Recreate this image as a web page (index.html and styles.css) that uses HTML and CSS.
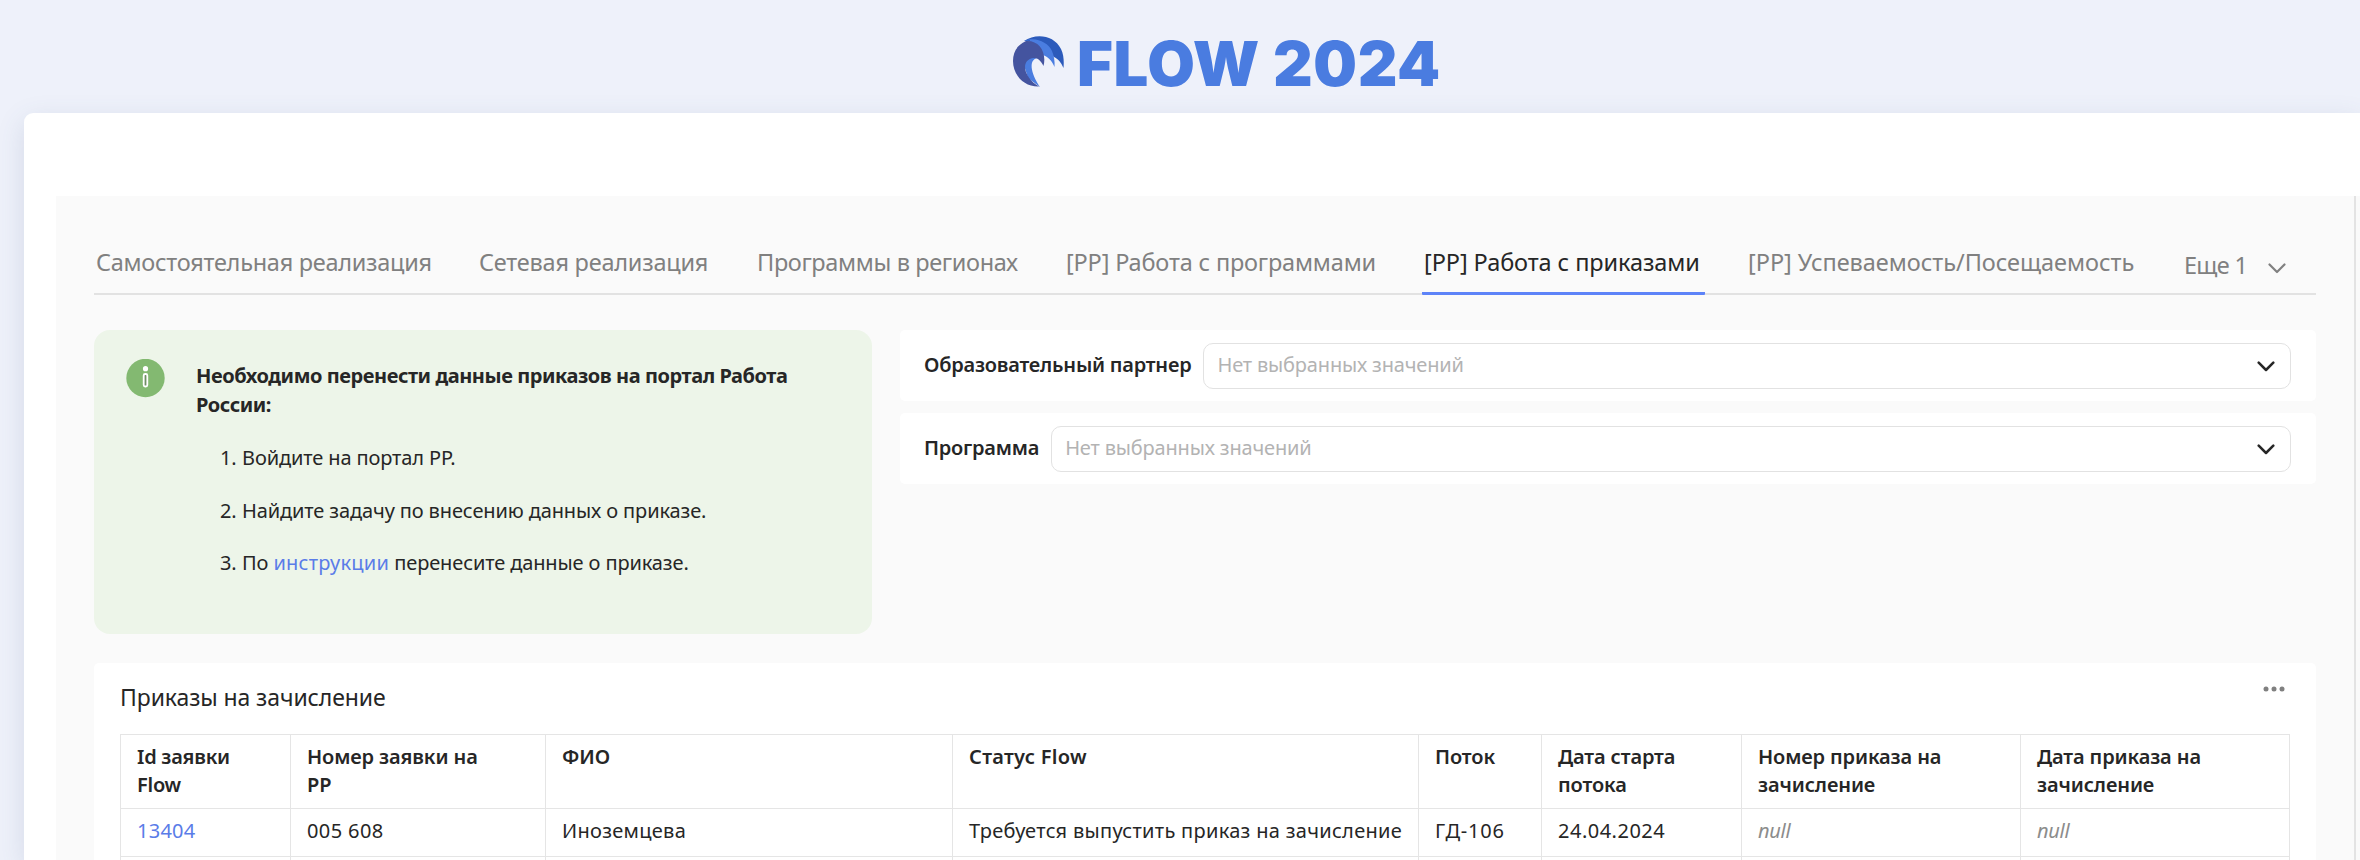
FILE: index.html
```html
<!DOCTYPE html>
<html lang="ru">
<head>
<meta charset="utf-8">
<title>FLOW 2024</title>
<link rel="stylesheet" href="styles.css">
</head>
<body>
<header class="brand">
  <svg class="brand-logo" width="51" height="51" viewBox="0 0 51 51" aria-hidden="true">
    <path fill="#2b5abb" d="M11 5C23-3 41-1 48 13c3 6 3 13 2.500 19C48 26 45 23 41 21L22 6Z"/>
    <path fill="#4a7de0" d="M11 5C22 0 35 6 39 15c2 5 3 10 2.500 16C39 25 35 20 29 19L24 22C16 24 17 36 27 51L15 42L10 26L17 4Z"/>
    <path fill="#44549f" d="M13 5C26 4 34 16 30.500 30C28 25 25 21.500 20 22C6 25 12 43 26 50.500C11 51 0 39 0 25C0 16 4 9 13 5Z"/>
  </svg>
  <h1 class="brand-title">FLOW 2024</h1>
</header>
<main class="card">
  <div class="dashboard">
    <nav class="tabs">
      <a class="tab tab-own">Самостоятельная реализация</a>
      <a class="tab tab-net">Сетевая реализация</a>
      <a class="tab tab-regions">Программы в регионах</a>
      <a class="tab tab-programs">[РР] Работа с программами</a>
      <a class="tab tab-orders">[РР] Работа с приказами</a>
      <a class="tab tab-progress">[РР] Успеваемость/Посещаемость</a>
      <a class="tab tab-more">Еще 1
        <svg width="18" height="11" viewBox="0 0 18 11"><path d="M1.500 1.500L9 9L16.500 1.500" fill="none" stroke="#808080" stroke-width="2.200" stroke-linecap="round" stroke-linejoin="round"/></svg>
      </a>
    </nav>
    <div class="top-row">
      <section class="notice">
        <svg class="notice-icon" width="39" height="39" viewBox="0 0 39 39">
          <circle cx="19.500" cy="19" r="19.200" fill="#83b971"/>
          <circle cx="19.500" cy="9.700" r="2.600" fill="#fff"/>
          <rect x="17.700" y="15" width="3.600" height="12.500" rx="1.500" fill="#6f8f64" stroke="#fff" stroke-width="1.800"/>
        </svg>
        <div class="notice-body">
          <p class="notice-title">Необходимо перенести данные приказов на портал Работа России:</p>
          <div class="steps">
            <div class="step"><span class="step-no">1.</span><span>Войдите на портал РР.</span></div>
            <div class="step"><span class="step-no">2.</span><span>Найдите задачу по внесению данных о приказе.</span></div>
            <div class="step"><span class="step-no">3.</span><span>По <a class="link">инструкции</a> перенесите данные о приказе.</span></div>
          </div>
        </div>
      </section>
      <section class="filters">
        <div class="filter">
          <span class="filter-label">Образовательный партнер</span>
          <div class="select"><span>Нет выбранных значений</span>
            <svg width="18" height="11" viewBox="0 0 18 11"><path d="M1.700 1.700L9 9L16.300 1.700" fill="none" stroke="#262626" stroke-width="2.500" stroke-linecap="round" stroke-linejoin="round"/></svg>
          </div>
        </div>
        <div class="filter">
          <span class="filter-label">Программа</span>
          <div class="select"><span>Нет выбранных значений</span>
            <svg width="18" height="11" viewBox="0 0 18 11"><path d="M1.700 1.700L9 9L16.300 1.700" fill="none" stroke="#262626" stroke-width="2.500" stroke-linecap="round" stroke-linejoin="round"/></svg>
          </div>
        </div>
      </section>
    </div>
    <section class="orders">
      <div class="orders-head">
        <h2 class="orders-title">Приказы на зачисление</h2>
        <svg class="orders-menu" width="22" height="6" viewBox="0 0 22 6" fill="#808080"><circle cx="3" cy="3" r="2.500"/><circle cx="11" cy="3" r="2.500"/><circle cx="19" cy="3" r="2.500"/></svg>
      </div>
      <table class="table">
        <colgroup><col class="c-id"><col class="c-num"><col class="c-name"><col class="c-status"><col class="c-flow"><col class="c-start"><col class="c-order"><col class="c-date"></colgroup>
        <thead>
          <tr><th class="th-id">Id заявки<br>Flow</th><th>Номер заявки на<br>РР</th><th>ФИО</th><th class="th-status">Статус Flow</th><th>Поток</th><th>Дата старта<br>потока</th><th>Номер приказа на<br>зачисление</th><th>Дата приказа на<br>зачисление</th></tr>
        </thead>
        <tbody>
          <tr><td><a class="link">13404</a></td><td class="td-num">005 608</td><td>Иноземцева</td><td>Требуется выпустить приказ на зачисление</td><td class="td-flow">ГД-106</td><td class="td-date">24.04.2024</td><td class="null">null</td><td class="null">null</td></tr>
          <tr><td></td><td></td><td></td><td></td><td></td><td></td><td></td><td></td></tr>
        </tbody>
      </table>
    </section>
  </div>
</main>
</body>
</html>
```
FILE: styles.css
```css
* { box-sizing: border-box; }

body {
  margin: 0;
  width: 2360px;
  height: 860px;
  overflow: hidden;
  background: #eef1fa;
  color: #262626;
  font: 20px/28px "Noto Sans", sans-serif;
}

.brand {
  display: flex;
  align-items: center;
  height: 113px;
  padding: 9px 0 0 1013px;
}
.brand-logo { display: block; margin-right: 13px; }
.brand-title {
  margin: 5px 0 0;
  color: #4a7ce0;
  font: 900 61.5px/74px Inter, sans-serif;
  letter-spacing: 0.65px;
  white-space: nowrap;
}

.card {
  width: 2336px;
  height: 747px;
  margin-left: 24px;
  padding: 83px 0 0 32px;
  border-radius: 9px 0 0 0;
  background: linear-gradient(#fafafa, #fafafa) right bottom / 4px 664px no-repeat, #fff;
  box-shadow: 0 8px 28px rgba(70, 85, 130, 0.15);
}
.dashboard {
  width: 2300px;
  height: 664px;
  padding: 50px 38px 0;
  overflow: hidden;
  background: #fafafa;
  border-right: 2px solid #e3e3e3;
}

/* Tabs */
.tabs {
  display: flex;
  width: 2222px;
  height: 49px;
  border-bottom: 2px solid #e2e2e2;
}
.tab {
  flex: none;
  height: 49px;
  padding-left: 2px;
  color: #808080;
  font-size: 23.5px;
  line-height: 32px;
  white-space: nowrap;
}
.tab-own { width: 383px; letter-spacing: -0.27px; }
.tab-net { width: 278px; letter-spacing: -0.22px; }
.tab-regions { width: 309px; letter-spacing: -0.35px; }
.tab-programs { width: 358px; letter-spacing: -0.17px; }
.tab-orders {
  width: 283px;
  margin-right: 41px;
  border-bottom: 3px solid #5d83f8;
  border-radius: 1px;
  color: #262626;
  letter-spacing: -0.08px;
}
.tab-progress { width: 436px; letter-spacing: -0.03px; }
.tab-more { padding-top: 3px; letter-spacing: -0.7px; }
.tab-more svg { margin-left: 15px; }

/* Notice and filters */
.top-row {
  display: flex;
  align-items: flex-start;
  gap: 28px;
  width: 2222px;
  margin-top: 35px;
}
.notice {
  display: flex;
  width: 778px;
  height: 304px;
  padding: 29px 32px;
  border-radius: 16px;
  background: #edf5e9;
  line-height: 29px;
}
.notice-icon { flex: none; margin-right: 31px; }
.notice-body { padding-top: 2px; }
.notice-title { width: 630px; margin: 0 0 24px; font-weight: 700; letter-spacing: -0.44px; }
.steps { display: grid; gap: 23.5px; padding-left: 24px; letter-spacing: -0.12px; }
.step { display: flex; white-space: pre; }
.step-no { width: 22px; }
.link { color: #5a7ce8; letter-spacing: 0.25px; }

.filters { display: grid; flex: 1; gap: 12px; }
.filter {
  display: flex;
  align-items: center;
  gap: 12px;
  height: 71px;
  padding: 0 25px 0 24px;
  border-radius: 5px;
  background: #fff;
}
.filter-label { padding-bottom: 2px; font-weight: 600; letter-spacing: -0.22px; }
.select {
  display: flex;
  flex: 1;
  align-items: center;
  justify-content: space-between;
  height: 46px;
  padding: 0 15px 1px 13px;
  border: 1px solid #e2e2e2;
  border-radius: 10px;
  color: #b3b3b3;
  letter-spacing: -0.17px;
}
.select svg { margin-top: 3px; }

/* Orders table */
.orders {
  width: 2222px;
  height: 300px;
  margin-top: 29px;
  padding: 19px 26px 0;
  border-radius: 5px;
  background: #fff;
}
.orders-head { display: flex; justify-content: space-between; margin-bottom: 22px; padding-right: 5px; }
.orders-title { margin: 0; font-size: 23px; font-weight: 400; line-height: 30px; letter-spacing: -0.1px; }
.orders-menu { margin-top: 4px; }
.table {
  width: 2170px;
  table-layout: fixed;
  border-spacing: 0;
  border-top: 1px solid #e5e5e5;
  border-left: 1px solid #e5e5e5;
}
.c-id { width: 170px; }
.c-num { width: 255px; }
.c-name { width: 407px; }
.c-status { width: 466px; }
.c-flow { width: 123px; }
.c-start { width: 200px; }
.c-order { width: 279px; }
.c-date { width: 269px; }
.table th, .table td {
  padding: 8px 0 9px 16px;
  border-right: 1px solid #e5e5e5;
  border-bottom: 1px solid #e5e5e5;
  text-align: left;
  vertical-align: top;
  white-space: nowrap;
}
.table th { font-weight: 600; letter-spacing: -0.12px; }
.table .th-id { letter-spacing: -0.25px; }
.table .th-status { letter-spacing: 0.3px; }
.table td { height: 48px; padding: 8px 0 11px 16px; letter-spacing: 0.3px; }
.table .td-num { letter-spacing: 0.4px; }
.table .td-date { letter-spacing: 0.5px; }
.table .td-flow { letter-spacing: 0.8px; }
.table .null { color: #8c8c8c; font-style: italic; letter-spacing: -0.3px; }
```
